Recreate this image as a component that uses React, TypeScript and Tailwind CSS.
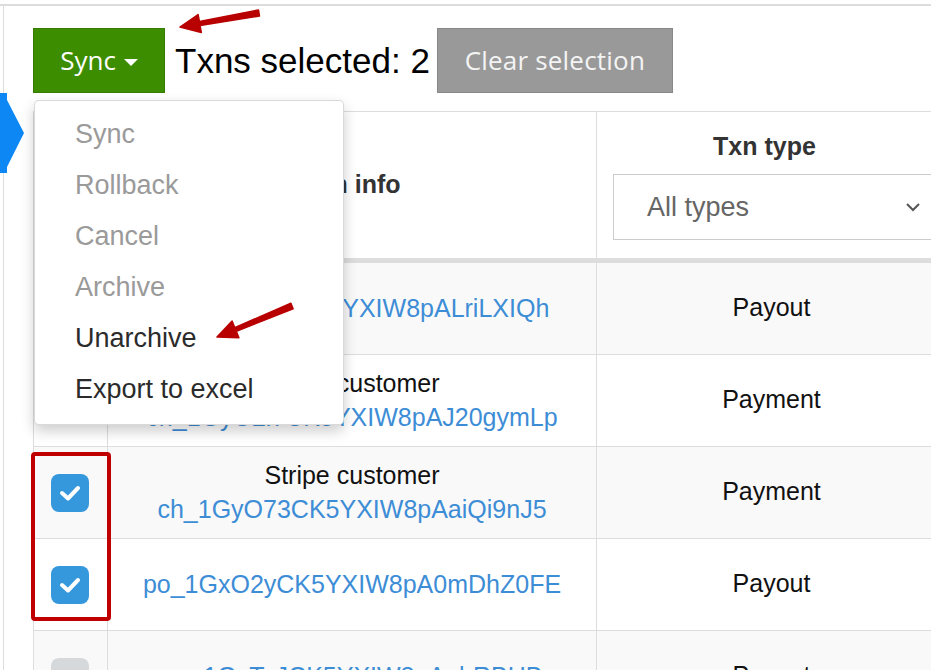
import { useState } from "react";

// rows of the txn table
const rows = [
  { customer: "", id: "po_1GyP2mCK5YXIW8pALriLXIQh", type: "Payout", checked: false },
  { customer: "Stripe customer", id: "ch_1GyO2l7CK5YXIW8pAJ20gymLp", type: "Payment", checked: false },
  { customer: "Stripe customer", id: "ch_1GyO73CK5YXIW8pAaiQi9nJ5", type: "Payment", checked: true },
  { customer: "", id: "po_1GxO2yCK5YXIW8pA0mDhZ0FE", type: "Payout", checked: true },
  { customer: "", id: "po_1GxTaJCK5YXIW8pAobRBHB", type: "Payout", checked: false },
];

const menu = [
  { label: "Sync", disabled: true },
  { label: "Rollback", disabled: true },
  { label: "Cancel", disabled: true },
  { label: "Archive", disabled: true },
  { label: "Unarchive", disabled: false },
  { label: "Export to excel", disabled: false },
];

const Checkbox = ({ checked }: { checked: boolean }) => {
  return checked ? (
    <div className="w-[38px] h-[38px] rounded-[8px] bg-[#3597dc] flex items-center justify-center">
      <svg width="22" height="18" viewBox="0 0 22 18">
        <polyline
          points="3,9 9,14.5 19,4"
          fill="none"
          stroke="white"
          strokeWidth="4"
          strokeLinecap="round"
          strokeLinejoin="round"
        />
      </svg>
    </div>
  ) : (
    <div className="w-[38px] h-[38px] rounded-[8px] bg-[#d6d9dc]" />
  );
};

const App = () => {
  const [open] = useState(true);

  return (
    <div className="relative w-[931px] h-[670px] overflow-hidden bg-white font-['Liberation_Sans',Arial,sans-serif]">
      {/* frame */}
      <div className="mt-[4px] border-t-2 border-[#dcdcdc]">
        <div className="ml-[3px] h-[700px] border-l border-[#dddddd] pl-[29px] pt-[22px]">
          {/* toolbar */}
          <div className="flex items-center h-[65px]">
            <button className="w-[132px] h-[65px] bg-[#3c8d00] border border-[#357c00] text-white text-[26px] font-['Open_Sans',sans-serif] flex items-center justify-center gap-[8px]">
              <span>Sync</span>
              <span className="w-0 h-0 border-l-[7px] border-r-[7px] border-t-[7px] border-l-transparent border-r-transparent border-t-white mt-[3px]" />
            </button>
            <span className="ml-[10px] text-[35px] text-black leading-none">
              Txns selected: 2
            </span>
            <button className="ml-[7px] w-[236px] h-[65px] bg-[#999999] border border-[#888888] text-[#f4f4f4] text-[26px] font-['Open_Sans',sans-serif] tracking-[0.2px]">
              Clear selection
            </button>
          </div>

          {/* table */}
          <div className="mt-[18px] w-[925px] border-l border-t border-[#dddddd]">
            {/* header */}
            <div className="grid grid-cols-[74px_489px_360px] h-[151px] border-b-[5px] border-[#dddddd]">
              <div className="border-r border-[#dddddd]" />
              <div className="border-r border-[#dddddd] flex items-center justify-center text-[25px] font-bold text-[#333333]">
                Txn info
              </div>
              <div className="border-r border-[#dddddd] pl-[16px] pt-[19px]">
                <div className="pr-[40px] text-center text-[25px] font-bold text-[#333333] leading-[30px]">
                  Txn type
                </div>
                <div className="mt-[13px] w-[322px] h-[66px] border border-[#cccccc] flex items-center justify-between pl-[33px] pr-[13px] text-[27px] text-[#666666]">
                  <span>All types</span>
                  <svg width="16" height="10" viewBox="0 0 16 10">
                    <polyline
                      points="2,2 8,8 14,2"
                      fill="none"
                      stroke="#555"
                      strokeWidth="2"
                    />
                  </svg>
                </div>
              </div>
            </div>
            {/* rows */}
            {rows.map((v, i) => {
              return (
                <div
                  key={i}
                  className={
                    i % 2 === 0
                      ? "grid grid-cols-[74px_489px_360px] h-[92px] border-b border-[#dddddd] bg-[#f9f9f9]"
                      : "grid grid-cols-[74px_489px_360px] h-[92px] border-b border-[#dddddd] bg-white"
                  }
                >
                  <div className="border-r border-[#dddddd] flex items-center justify-center pr-[1px]">
                    <Checkbox checked={v.checked} />
                  </div>
                  <div className="border-r border-[#dddddd] flex flex-col items-center justify-center pb-[2px] text-[25px] leading-[34px]">
                    {v.customer !== "" && (
                      <span className="text-[#111111]">{v.customer}</span>
                    )}
                    <span className="text-[#3d8dd6]">{v.id}</span>
                  </div>
                  <div className="border-r border-[#dddddd] flex items-center justify-center pr-[10px] pb-[2px] text-[25px] text-[#111111]">
                    {v.type}
                  </div>
                </div>
              );
            })}
          </div>
        </div>
      </div>

      {/* blue marker on the left edge */}
      <svg className="absolute left-0 top-[93px]" width="26" height="82" viewBox="0 0 26 82">
        <polygon points="0,0 7,0 7,7 24,40 7,74 7,80 0,80" fill="#0d87f3" />
      </svg>

      {/* dropdown menu */}
      {open && (
        <div className="absolute left-[34px] top-[100px] w-[310px] h-[325px] bg-white border border-black/15 rounded-[5px] shadow-[0_6px_14px_rgba(0,0,0,0.2)] pt-[8px]">
          {menu.map((v, i) => {
            return (
              <div
                key={i}
                className={
                  v.disabled
                    ? "h-[51px] leading-[51px] pl-[40px] text-[27px] text-[#9a9a9a]"
                    : "h-[51px] leading-[51px] pl-[40px] text-[27px] text-[#2b2b2b]"
                }
              >
                {v.label}
              </div>
            );
          })}
        </div>
      )}

      {/* red annotation box */}
      <div className="absolute left-[31px] top-[452px] w-[80px] h-[169px] border-4 border-[#c00000] rounded-[4px]" />

      {/* red annotation arrows */}
      <svg className="absolute left-0 top-0 pointer-events-none" width="931" height="670">
        <polygon
          points="180,27 201.3,32.4 200,25.5 259.5,16 258.5,10 199.4,21.5 198.1,14.6"
          fill="#b80000"
          stroke="#b80000"
          strokeWidth="1.5"
          strokeLinejoin="round"
        />
        <polygon
          points="217,337 238.9,337.7 236.3,331.2 293.1,308.8 290.9,303.2 234.7,327.6 232.1,321.1"
          fill="#b80000"
          stroke="#b80000"
          strokeWidth="1.5"
          strokeLinejoin="round"
        />
      </svg>
    </div>
  );
};

export default App;
